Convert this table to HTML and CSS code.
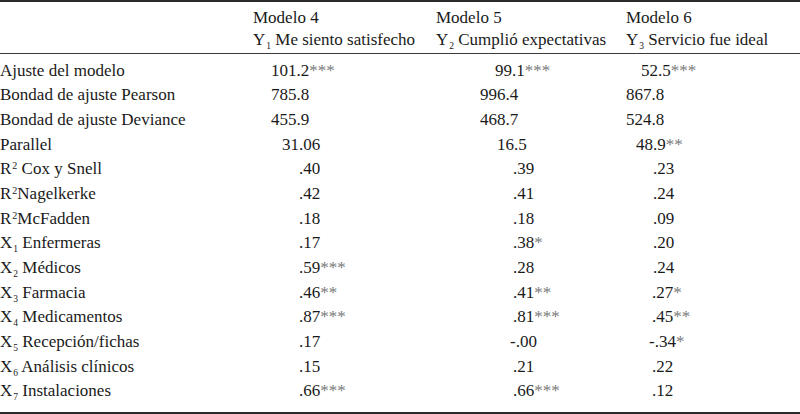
FILE: index.html
```html
<!DOCTYPE html>
<html lang="es">
<head>
<meta charset="utf-8">
<title>Modelos</title>
<link rel="stylesheet" href="styles.css">
</head>
<body>
<div class="tbl">
  <div class="head">
    <div class="row hrow">
      <div></div>
      <div>Modelo 4</div>
      <div>Modelo 5</div>
      <div>Modelo 6</div>
    </div>
    <div class="row hrow">
      <div></div>
      <div>Y<sub>1</sub> Me siento satisfecho</div>
      <div>Y<sub>2</sub> Cumplió expectativas</div>
      <div>Y<sub>3</sub> Servicio fue ideal</div>
    </div>
  </div>
  <div class="body">
    <div class="row"><div>Ajuste del modelo</div><div class="o18">101.2<span class="st">***</span></div><div class="o59">99.1<span class="st">***</span></div><div class="o15">52.5<span class="st">***</span></div></div>
    <div class="row"><div>Bondad de ajuste Pearson</div><div class="o18">785.8</div><div class="o44">996.4</div><div class="o0">867.8</div></div>
    <div class="row"><div>Bondad de ajuste Deviance</div><div class="o18">455.9</div><div class="o44">468.7</div><div class="o0">524.8</div></div>
    <div class="row"><div>Parallel</div><div class="o29">31.06</div><div class="o61">16.5</div><div class="o10">48.9<span class="st">**</span></div></div>
    <div class="row"><div>R<sup>2</sup> Cox y Snell</div><div class="o46">.40</div><div class="o77">.39</div><div class="o27">.23</div></div>
    <div class="row"><div>R<sup>2</sup>Nagelkerke</div><div class="o46">.42</div><div class="o77">.41</div><div class="o27">.24</div></div>
    <div class="row"><div>R<sup>2</sup>McFadden</div><div class="o46">.18</div><div class="o77">.18</div><div class="o27">.09</div></div>
    <div class="row"><div>X<sub>1</sub> Enfermeras</div><div class="o46">.17</div><div class="o77">.38<span class="st">*</span></div><div class="o27">.20</div></div>
    <div class="row"><div>X<sub>2</sub> Médicos</div><div class="o46">.59<span class="st">***</span></div><div class="o77">.28</div><div class="o27">.24</div></div>
    <div class="row"><div>X<sub>3</sub> Farmacia</div><div class="o46">.46<span class="st">**</span></div><div class="o77">.41<span class="st">**</span></div><div class="o26">.27<span class="st">*</span></div></div>
    <div class="row"><div>X<sub>4</sub> Medicamentos</div><div class="o46">.87<span class="st">***</span></div><div class="o77">.81<span class="st">***</span></div><div class="o26">.45<span class="st">**</span></div></div>
    <div class="row"><div>X<sub>5</sub> Recepción/fichas</div><div class="o46">.17</div><div class="o74">-.00</div><div class="o23">-.34<span class="st">*</span></div></div>
    <div class="row"><div>X<sub>6</sub> Análisis clínicos</div><div class="o46">.15</div><div class="o77">.21</div><div class="o26">.22</div></div>
    <div class="row"><div>X<sub>7</sub> Instalaciones</div><div class="o46">.66<span class="st">***</span></div><div class="o77">.66<span class="st">***</span></div><div class="o26">.12</div></div>
  </div>
</div>
</body>
</html>
```
FILE: styles.css
```css
html, body {
  margin: 0;
  padding: 0;
  background: #ffffff;
}
body {
  font-family: "Liberation Serif", "DejaVu Serif", serif;
  font-size: 17px;
  color: #1a1a1a;
}
.tbl {
  width: 800px;
  border-top: 2px solid #2a2a2a;
  border-bottom: 2px solid #2a2a2a;
}
.head {
  padding: 5px 0 2px;
  border-bottom: 1.5px solid #3a3a3a;
}
.body {
  padding: 4.5px 0 7.5px;
}
.row {
  display: grid;
  grid-template-columns: 253px 183px 190px 1fr;
  height: 24.7px;
  line-height: 24.7px;
  white-space: nowrap;
}
.hrow {
  height: 22px;
  line-height: 22px;
}
sub {
  font-size: 9.5px;
  vertical-align: -4px;
  line-height: 0;
  margin-left: 1px;
}
sup {
  font-size: 10px;
  vertical-align: 5px;
  line-height: 0;
  margin-left: 1px;
}
.st {
  color: #7a7a7a;
}
.o0 { padding-left: 0; }
.o10 { padding-left: 10px; }
.o15 { padding-left: 15px; }
.o18 { padding-left: 18px; }
.o23 { padding-left: 23px; }
.o26 { padding-left: 26px; }
.o27 { padding-left: 27px; }
.o29 { padding-left: 29px; }
.o44 { padding-left: 44px; }
.o46 { padding-left: 46px; }
.o59 { padding-left: 59px; }
.o61 { padding-left: 61px; }
.o74 { padding-left: 74px; }
.o77 { padding-left: 77px; }
```
